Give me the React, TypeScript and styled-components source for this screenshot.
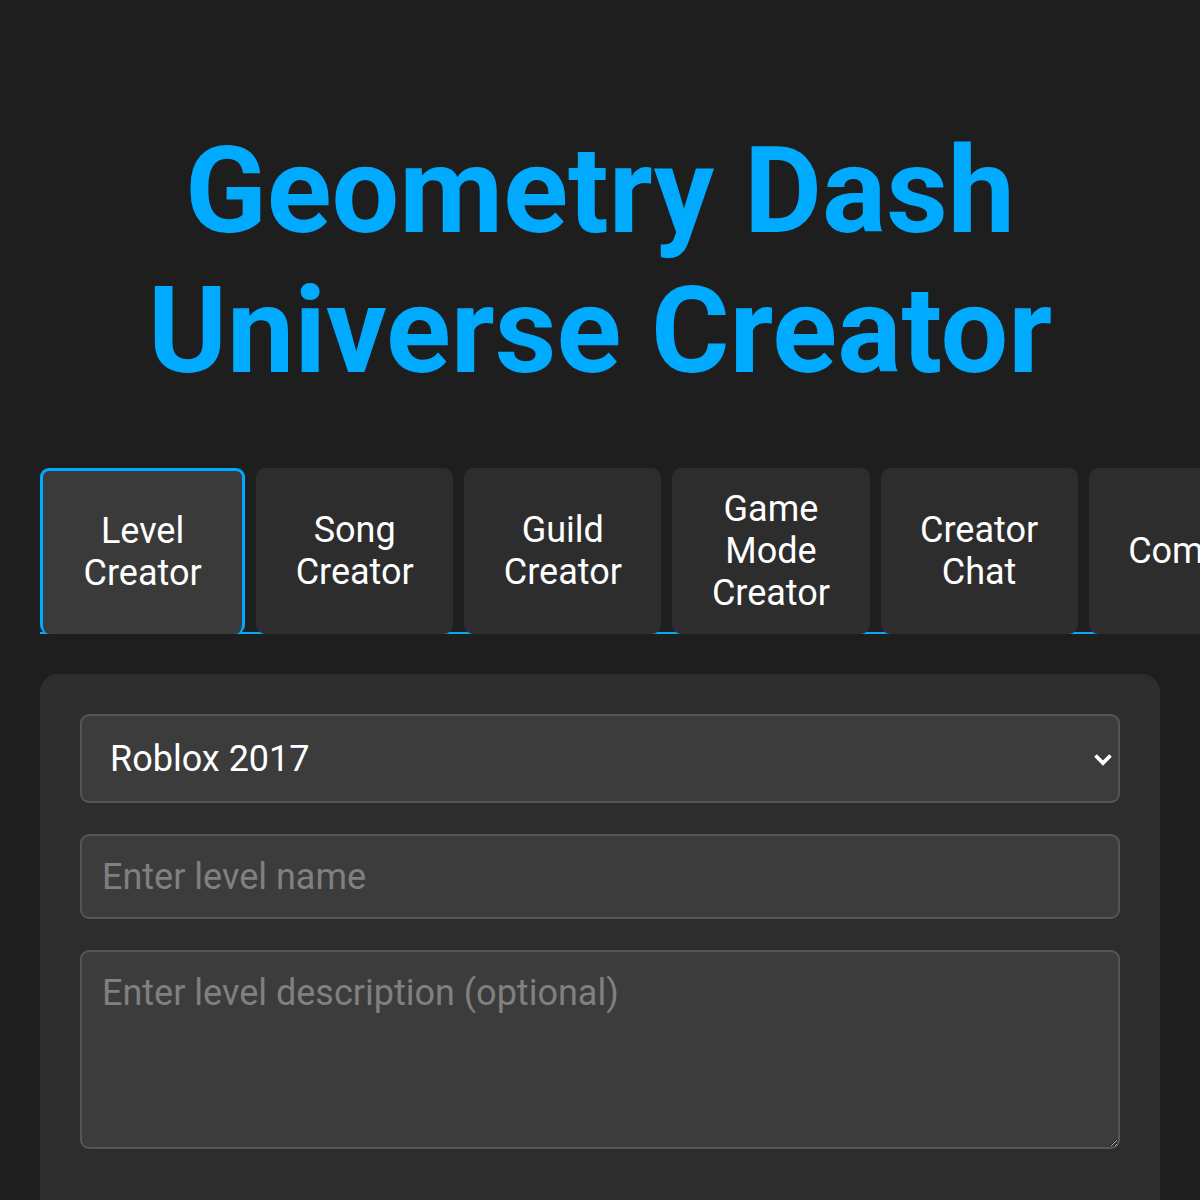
import React, { useState } from "react";
import styled, { createGlobalStyle } from "styled-components";

const Global = createGlobalStyle`
  html, body { margin: 0; padding: 0; background: #1e1e1e; overflow-x: hidden; }
  body { font-family: Roboto, "Liberation Sans", sans-serif; color: #fff; }
  * { box-sizing: border-box; }
`;

const Page = styled.div`
  padding: 121px 40px 40px;
`;

const Title = styled.h1`
  margin: 0 0 67px;
  font-family: Roboto, "Liberation Sans", sans-serif;
  font-weight: 700;
  font-size: 120px;
  line-height: normal;
  color: #00aaff;
  text-align: center;
`;

const TabBar = styled.div`
  display: flex;
  gap: 11px;
  border-bottom: 2px solid #00aaff;
`;

const Tab = styled.button<{ $active?: boolean }>`
  flex: 0 0 auto;
  width: min-content;
  display: flex;
  align-items: center;
  justify-content: center;
  margin-bottom: -2px;
  padding: ${(p) => (p.$active ? "19px 40.5px 20px" : "20px 39.5px")};
  border: ${(p) => (p.$active ? "3px solid #00aaff" : "none")};
  border-bottom: none;
  border-radius: 9px;
  background: ${(p) => (p.$active ? "#3a3a3a" : "#2d2d2d")};
  color: #fff;
  font-family: Roboto, "Liberation Sans", sans-serif;
  font-size: 36px;
  line-height: 42px;
  text-align: center;
  cursor: pointer;
`;

const Panel = styled.div`
  margin-top: 40px;
  background: #2d2d2d;
  border-radius: 18px;
  padding: 40px;
  display: flex;
  flex-direction: column;
  gap: 31px;
`;

const SelectWrap = styled.div`
  position: relative;
`;

const Select = styled.select`
  appearance: none;
  width: 100%;
  height: 89px;
  padding: 0 28px;
  background: #3c3c3c;
  border: 2px solid #555;
  border-radius: 9px;
  color: #fff;
  font-family: Roboto, "Liberation Sans", sans-serif;
  font-size: 36px;
  outline: none;
`;

const Chevron = styled.svg`
  position: absolute;
  right: 7px;
  top: 39px;
  width: 20px;
  height: 13px;
  pointer-events: none;
`;

const fieldBase = `
  width: 100%;
  padding: 20px;
  background: #3c3c3c;
  border: 2px solid #555;
  border-radius: 9px;
  color: #fff;
  font-family: Roboto, "Liberation Sans", sans-serif;
  font-size: 36px;
  line-height: normal;
  outline: none;
  display: block;
  &::placeholder { color: #808080; }
`;

const Input = styled.input`
  ${fieldBase}
  height: 85px;
`;

const TextArea = styled.textarea`
  ${fieldBase}
  height: 199px;
  resize: vertical;
`;

const Spacer = styled.div`
  height: 10px;
`;

const tabs = [
  "Level Creator",
  "Song Creator",
  "Guild Creator",
  "Game Mode Creator",
  "Creator Chat",
  "Community",
];

export default function App() {
  const [active, setActive] = useState(0);
  return (
    <>
      <Global />
      <Page>
        <Title>Geometry Dash Universe Creator</Title>
        <TabBar>
          {tabs.map((t, i) => (
            <Tab key={t} $active={i === active} onClick={() => setActive(i)}>
              {t}
            </Tab>
          ))}
        </TabBar>
        <Panel>
          <SelectWrap>
            <Select defaultValue="Roblox 2017">
              <option>Roblox 2017</option>
              <option>Geometry Dash 2.2</option>
            </Select>
            <Chevron viewBox="0 0 20 13">
              <path d="M2.5 2.5 L10 10 L17.5 2.5" fill="none" stroke="#fff" strokeWidth="3.8" />
            </Chevron>
          </SelectWrap>
          <Input placeholder="Enter level name" />
          <TextArea placeholder="Enter level description (optional)" />
          <Spacer />
          <Input placeholder="Enter creator name" />
        </Panel>
      </Page>
    </>
  );
}
